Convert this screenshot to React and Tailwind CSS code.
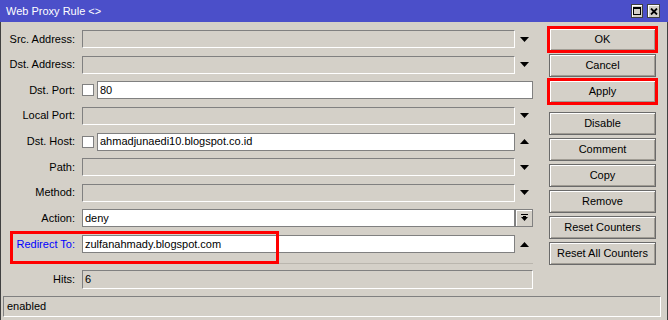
const FONT = "font-['Liberation_Sans',Arial,sans-serif]";

function DownArrow() {
  return (
    <svg width="9" height="5" viewBox="0 0 9 5">
      <polygon points="0,0 9,0 4.5,5" fill="#000" />
    </svg>
  );
}

function UpArrow() {
  return (
    <svg width="9" height="5" viewBox="0 0 9 5">
      <polygon points="0,5 9,5 4.5,0" fill="#000" />
    </svg>
  );
}

function Label({ children, blue }) {
  return (
    <div
      className={`w-[74px] shrink-0 text-right pr-[0px] leading-none ${
        blue ? "text-[#0000ff]" : "text-black"
      }`}
    >
      {children}
    </div>
  );
}

function GrayField({ className = "", children }) {
  return (
    <div
      className={`h-full border border-t-[#808080] border-l-[#808080] border-b-white border-r-white bg-[#d4d0c8] flex items-center px-[2px] ${className}`}
    >
      {children}
    </div>
  );
}

function WhiteField({ className = "", children }) {
  return (
    <div
      className={`h-full border border-[#808080] bg-white flex items-center px-[2px] leading-none ${className}`}
    >
      {children}
    </div>
  );
}

function Checkbox() {
  return (
    <div className="w-[12px] h-[12px] shrink-0 border border-[#808080] bg-white mr-[3px]" />
  );
}

function Row({ label, blue, children }) {
  return (
    <div className="flex items-center h-[18px]">
      <Label blue={blue}>{label}</Label>
      <div className="ml-[7px] w-[451px] h-full flex items-center">{children}</div>
    </div>
  );
}

function Arrow({ up }) {
  return (
    <div className="w-[18px] h-full shrink-0 flex items-center justify-center">
      {up ? <UpArrow /> : <DownArrow />}
    </div>
  );
}

function Button({ children, className = "" }) {
  return (
    <div
      className={`h-[23px] w-[107px] flex items-center justify-center border border-[#6a6a6a] shadow-[inset_1px_1px_0_#ffffff,inset_-1px_-1px_0_#a09c94] bg-[#d4d0c8] text-black ${className}`}
    >
      {children}
    </div>
  );
}

export default function App() {
  return (
    <div
      className={`relative w-[668px] h-[320px] overflow-hidden bg-[#d4d0c8] flex flex-col text-[11px] ${FONT}`}
    >
      {/* title bar */}
      <div className="h-[22px] shrink-0 bg-[#4b4fc9] flex items-center justify-between pl-[6px] pr-[8px]">
        <span className="text-white text-[11px] leading-none">Web Proxy Rule &lt;&gt;</span>
        <div className="flex items-center gap-[4px]">
          <div className="w-[12px] h-[14px] bg-[#d4d0c8] border border-[#404040] shadow-[inset_1px_1px_0_#fff] flex items-center justify-center">
            <div className="w-[8px] h-[8px] border border-black border-t-2" />
          </div>
          <div className="w-[13px] h-[14px] bg-[#d4d0c8] border border-[#404040] shadow-[inset_1px_1px_0_#fff] flex items-center justify-center">
            <svg width="8" height="7" viewBox="0 0 8 7">
              <path d="M1 0.5L7 6.5M7 0.5L1 6.5" stroke="#000" strokeWidth="1.8" />
            </svg>
          </div>
        </div>
      </div>

      {/* body */}
      <div className="flex-1 flex flex-col border-l border-r border-[#404040]">
        <div className="flex pt-[6px]">
          {/* form */}
          <div className="w-[532px] pt-[2px] flex flex-col">
            <div className="flex flex-col gap-[7.625px]">
              <Row label="Src. Address:">
                <GrayField className="flex-1" />
                <Arrow />
              </Row>
              <Row label="Dst. Address:">
                <GrayField className="flex-1" />
                <Arrow />
              </Row>
              <Row label="Dst. Port:">
                <Checkbox />
                <WhiteField className="flex-1">80</WhiteField>
              </Row>
              <Row label="Local Port:">
                <GrayField className="flex-1" />
                <Arrow />
              </Row>
              <Row label="Dst. Host:">
                <Checkbox />
                <WhiteField className="flex-1">ahmadjunaedi10.blogspot.co.id</WhiteField>
                <Arrow up />
              </Row>
              <Row label="Path:">
                <GrayField className="flex-1" />
                <Arrow />
              </Row>
              <Row label="Method:">
                <GrayField className="flex-1" />
                <Arrow />
              </Row>
              <Row label="Action:">
                <WhiteField className="flex-1">deny</WhiteField>
                <div className="w-[18px] h-full shrink-0 border border-[#808080] shadow-[inset_1px_1px_0_#fff] bg-[#d4d0c8] flex items-center justify-center">
                  <svg width="9" height="8" viewBox="0 0 9 8">
                    <rect x="1" y="0" width="7" height="1" fill="#000" />
                    <polygon points="1,3 8,3 4.5,7" fill="#000" />
                    <rect x="3" y="2" width="3" height="2" fill="#000" />
                  </svg>
                </div>
              </Row>
              <Row label="Redirect To:" blue>
                <WhiteField className="flex-1">zulfanahmady.blogspot.com</WhiteField>
                <Arrow up />
              </Row>
            </div>

            <div className="mt-[10px] ml-[81px] h-px bg-[#bab6ae]" />

            <div className="mt-[6px] flex items-center h-[19px]">
              <Label>Hits:</Label>
              <div className="ml-[7px] w-[451px] h-full">
                <GrayField>6</GrayField>
              </div>
            </div>
          </div>

          {/* buttons */}
          <div className="ml-[16px] flex flex-col gap-[3px]">
            <Button>OK</Button>
            <Button>Cancel</Button>
            <Button>Apply</Button>
            <Button className="mt-[6px]">Disable</Button>
            <Button>Comment</Button>
            <Button>Copy</Button>
            <Button>Remove</Button>
            <Button>Reset Counters</Button>
            <Button>Reset All Counters</Button>
          </div>
        </div>

        <div className="mt-[7px] ml-[2px] w-[658px] h-[21px] border border-t-[#808080] border-l-[#808080] border-b-white border-r-white flex items-center px-[3px]">
          enabled
        </div>
      </div>

      {/* annotation boxes */}
      <div className="absolute left-[547px] top-[26px] w-[111px] h-[27px] border-[3px] border-[#ff0000]" />
      <div className="absolute left-[547px] top-[78px] w-[111px] h-[27px] border-[3px] border-[#ff0000]" />
      <div className="absolute left-[10px] top-[231px] w-[269px] h-[33px] border-[3px] border-[#ff0000]" />
    </div>
  );
}
